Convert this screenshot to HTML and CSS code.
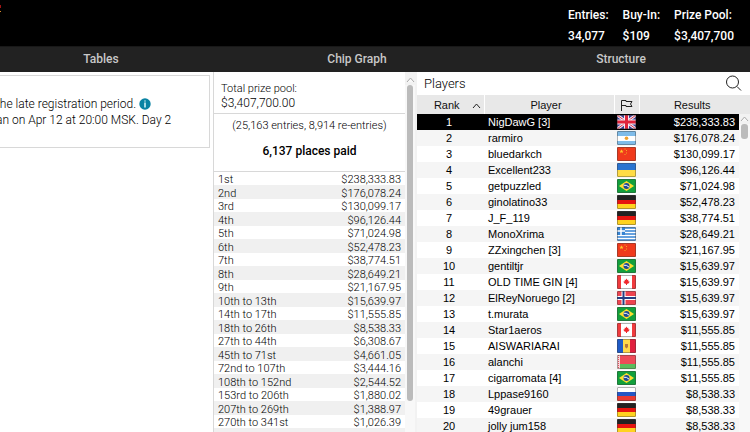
FILE: index.html
```html
<!DOCTYPE html>
<html lang="en">
<head>
  <meta charset="utf-8">
  <title>Tournament Lobby</title>
  <link rel="stylesheet" href="styles.css">
</head>
<body>
  <!-- flag icons -->
  <svg class="sprite" aria-hidden="true">
    <symbol id="gb" viewBox="0 0 19 14">
      <rect width="19" height="14" fill="#3b3f94"/>
      <path d="M0 0l19 14M19 0L0 14" stroke="#f4e9f1" stroke-width="3"/>
      <path d="M0 0l19 14M19 0L0 14" stroke="#d8344d" stroke-width="1"/>
      <path d="M9.5 0v14M0 7h19" stroke="#f4e9f1" stroke-width="5"/>
      <path d="M9.5 0v14M0 7h19" stroke="#e0243c" stroke-width="3"/>
    </symbol>
    <symbol id="ar" viewBox="0 0 19 14">
      <rect width="19" height="14" fill="#7fbce9"/>
      <rect y="5" width="19" height="5" fill="#fff"/>
      <circle cx="9.5" cy="7.2" r="1.8" fill="#f0a22e"/>
    </symbol>
    <symbol id="cn" viewBox="0 0 19 14">
      <rect width="19" height="14" fill="#f03a1c"/>
      <path d="M4.500 2.200l.6 1.500h1.600l-1.300 1 .5 1.600-1.400-1-1.400 1 .5-1.600-1.300-1h1.600z" fill="#ffc928"/>
      <path d="M7.500 1.500h1v1h-1zM9 3h1v1H9zM9 5.500h1v1H9zM7.500 7h1v1h-1z" fill="#f5a623"/>
    </symbol>
    <symbol id="ua" viewBox="0 0 19 14">
      <rect width="19" height="7" fill="#2a74d0"/>
      <rect y="7" width="19" height="7" fill="#ffdc45"/>
    </symbol>
    <symbol id="br" viewBox="0 0 19 14">
      <rect width="19" height="14" fill="#12a03c"/>
      <path d="M9.500 2l7.500 5-7.500 5L2 7z" fill="#ffde2e"/>
      <circle cx="9.500" cy="7" r="3" fill="#1f4b94"/>
      <path d="M6.700 6.200q3-.5 5.400 2" fill="none" stroke="#fff"/>
    </symbol>
    <symbol id="de" viewBox="0 0 19 14">
      <rect width="19" height="5" fill="#222"/>
      <rect y="5" width="19" height="4" fill="#e6140f"/>
      <rect y="9" width="19" height="5" fill="#ffd21f"/>
    </symbol>
    <symbol id="gr" viewBox="0 0 19 14">
      <rect width="19" height="14" fill="#fff"/>
      <path d="M0 1h19M0 4h19M0 7h19M0 10h19M0 13h19" stroke="#3583d3" stroke-width="1.700"/>
      <rect width="8" height="8" fill="#3583d3"/>
      <path d="M4 0v8M0 4h8" stroke="#fff" stroke-width="1.500"/>
    </symbol>
    <symbol id="ca" viewBox="0 0 19 14">
      <rect width="19" height="14" fill="#fff"/>
      <path d="M0 0h4v14H0zM15 0h4v14h-4z" fill="#f03a3d"/>
      <path d="M9.500 3.500l.9 1.500 1-.3-.2 1.600 1.600.4-1.700 2H10v1.300H9V8.700H7.900l-1.700-2 1.600-.4-.2-1.600 1 .3z" fill="#f0282c"/>
    </symbol>
    <symbol id="no" viewBox="0 0 19 14">
      <rect width="19" height="14" fill="#ee4450"/>
      <path d="M6.500 0v14M0 7h19" stroke="#fff" stroke-width="4"/>
      <path d="M6.500 0v14M0 7h19" stroke="#243f83" stroke-width="2"/>
    </symbol>
    <symbol id="md" viewBox="0 0 19 14">
      <rect width="19" height="14" fill="#ffd94a"/>
      <rect width="6" height="14" fill="#1f5bc7"/>
      <rect x="13" width="6" height="14" fill="#e0203e"/>
      <path d="M8 5h3v3l-1.500 1.500L8 8z" fill="#b5793c"/>
    </symbol>
    <symbol id="by" viewBox="0 0 19 14">
      <rect width="19" height="9" fill="#ee4a58"/>
      <rect y="9" width="19" height="5" fill="#5cbb5c"/>
      <rect width="3" height="14" fill="#f7d5d8"/>
      <path d="M1.500 0v14" stroke="#e0505c" stroke-dasharray="1 1"/>
    </symbol>
    <symbol id="ru" viewBox="0 0 19 14">
      <rect width="19" height="14" fill="#fff"/>
      <rect y="5" width="19" height="5" fill="#2456c4"/>
      <rect y="9" width="19" height="5" fill="#e83a32"/>
    </symbol>
  </svg>

  <header class="header">
    <svg class="logo" width="2" height="8" aria-hidden="true">
      <path d="M0 0h1v3H0z" fill="#a01414"/>
      <path d="M0 6h1v1H0z" fill="#d88a2a"/>
    </svg>
    <dl class="summary">
      <div><dt>Entries:</dt><dd>34,077</dd></div>
      <div><dt>Buy-In:</dt><dd>$109</dd></div>
      <div><dt>Prize Pool:</dt><dd>$3,407,700</dd></div>
    </dl>
  </header>

  <nav class="tabs">
    <a href="#tables">Tables</a>
    <a href="#chip-graph">Chip Graph</a>
    <a href="#structure">Structure</a>
  </nav>

  <main class="lobby">
    <section class="info">
      <div class="info-box">
        <p>the late registration period.
          <svg class="info-icon" width="12" height="12" viewBox="0 0 12 12" aria-hidden="true">
            <circle cx="6" cy="6" r="5.700" fill="#0a83a3"/>
            <path d="M5 2.500h2v1H5zM5 4.500h2v5H5z" fill="#a9dbe6"/>
          </svg>
        </p>
        <p>an on Apr 12 at 20:00 MSK. Day 2</p>
      </div>
    </section>

    <section class="prizes">
      <div class="prizes-content">
        <div class="pool">
          <div class="pool-label">Total prize pool:</div>
          <div class="pool-value">$3,407,700.00</div>
        </div>
        <div class="places">
          <div class="places-entries">(25,163 entries, 8,914 re-entries)</div>
          <div class="places-paid">6,137 places paid</div>
        </div>
        <table class="payouts">
          <tr><td>1st</td><td>$238,333.83</td></tr>
          <tr><td>2nd</td><td>$176,078.24</td></tr>
          <tr><td>3rd</td><td>$130,099.17</td></tr>
          <tr><td>4th</td><td>$96,126.44</td></tr>
          <tr><td>5th</td><td>$71,024.98</td></tr>
          <tr><td>6th</td><td>$52,478.23</td></tr>
          <tr><td>7th</td><td>$38,774.51</td></tr>
          <tr><td>8th</td><td>$28,649.21</td></tr>
          <tr><td>9th</td><td>$21,167.95</td></tr>
          <tr><td>10th to 13th</td><td>$15,639.97</td></tr>
          <tr><td>14th to 17th</td><td>$11,555.85</td></tr>
          <tr><td>18th to 26th</td><td>$8,538.33</td></tr>
          <tr><td>27th to 44th</td><td>$6,308.67</td></tr>
          <tr><td>45th to 71st</td><td>$4,661.05</td></tr>
          <tr><td>72nd to 107th</td><td>$3,444.16</td></tr>
          <tr><td>108th to 152nd</td><td>$2,544.52</td></tr>
          <tr><td>153rd to 206th</td><td>$1,880.02</td></tr>
          <tr><td>207th to 269th</td><td>$1,388.97</td></tr>
          <tr><td>270th to 341st</td><td>$1,026.39</td></tr>
          <tr><td></td><td></td></tr>
        </table>
      </div>
      <div class="scrollbar">
        <svg class="scroll-up" width="11" height="10" aria-hidden="true"><path d="M2 7l3.500-4L9 7"/></svg>
        <div class="scroll-track"><div class="scroll-thumb"></div></div>
      </div>
    </section>

    <section class="players">
      <div class="players-bar">
        <h2>Players</h2>
        <button class="search" aria-label="Search players">
          <svg width="17" height="17" viewBox="0 0 17 17"><circle cx="7.500" cy="7" r="6"/><path d="M12 11.500l4 4"/></svg>
        </button>
      </div>
      <div class="players-list">
        <table class="players-table">
          <colgroup><col class="col-rank"><col class="col-player"><col class="col-flag"><col></colgroup>
          <thead>
            <tr>
              <th class="rank-head">Rank <svg width="9" height="6" viewBox="0 0 9 6"><path d="M1 5l3.500-4L8 5"/></svg></th>
              <th class="player-head">Player</th>
              <th aria-label="Country"><svg width="13" height="12" viewBox="0 0 13 12"><path d="M1.500 12V1.500h4.500v1h6L10.500 5 12 7.500H6v-1H1.500"/></svg></th>
              <th class="results-head">Results</th>
            </tr>
          </thead>
          <tbody>
            <tr class="selected"><td>1</td><td>NigDawG [3]</td><td><svg class="flag"><use href="#gb"/></svg></td><td>$238,333.83</td></tr>
            <tr><td>2</td><td>rarmiro</td><td><svg class="flag"><use href="#ar"/></svg></td><td>$176,078.24</td></tr>
            <tr><td>3</td><td>bluedarkch</td><td><svg class="flag"><use href="#cn"/></svg></td><td>$130,099.17</td></tr>
            <tr><td>4</td><td>Excellent233</td><td><svg class="flag"><use href="#ua"/></svg></td><td>$96,126.44</td></tr>
            <tr><td>5</td><td>getpuzzled</td><td><svg class="flag"><use href="#br"/></svg></td><td>$71,024.98</td></tr>
            <tr><td>6</td><td>ginolatino33</td><td><svg class="flag"><use href="#de"/></svg></td><td>$52,478.23</td></tr>
            <tr><td>7</td><td>J_F_119</td><td><svg class="flag"><use href="#de"/></svg></td><td>$38,774.51</td></tr>
            <tr><td>8</td><td>MonoXrima</td><td><svg class="flag"><use href="#gr"/></svg></td><td>$28,649.21</td></tr>
            <tr><td>9</td><td>ZZxingchen [3]</td><td><svg class="flag"><use href="#cn"/></svg></td><td>$21,167.95</td></tr>
            <tr><td>10</td><td>gentiltjr</td><td><svg class="flag"><use href="#br"/></svg></td><td>$15,639.97</td></tr>
            <tr><td>11</td><td>OLD TIME GIN [4]</td><td><svg class="flag"><use href="#ca"/></svg></td><td>$15,639.97</td></tr>
            <tr><td>12</td><td>ElReyNoruego [2]</td><td><svg class="flag"><use href="#no"/></svg></td><td>$15,639.97</td></tr>
            <tr><td>13</td><td>t.murata</td><td><svg class="flag"><use href="#br"/></svg></td><td>$15,639.97</td></tr>
            <tr><td>14</td><td>Star1aeros</td><td><svg class="flag"><use href="#ca"/></svg></td><td>$11,555.85</td></tr>
            <tr><td>15</td><td>AISWARIARAI</td><td><svg class="flag"><use href="#md"/></svg></td><td>$11,555.85</td></tr>
            <tr><td>16</td><td>alanchi</td><td><svg class="flag"><use href="#by"/></svg></td><td>$11,555.85</td></tr>
            <tr><td>17</td><td>cigarromata [4]</td><td><svg class="flag"><use href="#br"/></svg></td><td>$11,555.85</td></tr>
            <tr><td>18</td><td>Lppase9160</td><td><svg class="flag"><use href="#ru"/></svg></td><td>$8,538.33</td></tr>
            <tr><td>19</td><td>49grauer</td><td><svg class="flag"><use href="#de"/></svg></td><td>$8,538.33</td></tr>
            <tr><td>20</td><td>jolly jum158</td><td><svg class="flag"><use href="#de"/></svg></td><td>$8,538.33</td></tr>
          </tbody>
        </table>
        <div class="scrollbar players-scroll">
          <svg class="scroll-up" width="11" height="10" aria-hidden="true"><path d="M2 7l3.500-4L9 7"/></svg>
          <div class="scroll-track"><div class="scroll-thumb"></div></div>
        </div>
      </div>
    </section>
  </main>
</body>
</html>
```
FILE: styles.css
```css
* {
  box-sizing: border-box;
}

body {
  margin: 0;
  height: 100vh;
  overflow: hidden;
  display: flex;
  flex-direction: column;
  background: #fff;
  color: #000;
  font-family: Roboto, "Liberation Sans", sans-serif;
  font-size: 12px;
  font-weight: 300;
}

.sprite {
  position: absolute;
  width: 0;
  height: 0;
}

.header {
  display: flex;
  justify-content: space-between;
  align-items: flex-start;
  height: 46px;
  padding: 5px 16px 0 0;
  background: #000;
  color: #fff;
}

.summary {
  display: flex;
  gap: 14px;
  margin: 0;
  font-weight: 500;
  line-height: 21px;
}

.summary dd {
  margin: 0;
}

.tabs {
  display: grid;
  grid-template-columns: 202px 310px 1fr;
  padding-right: 20px;
  border-top: 1px solid #181818;
  background: #222;
}

.tabs a {
  color: #c8c8c8;
  font-weight: 500;
  line-height: 25px;
  text-align: center;
  text-decoration: none;
}

.lobby {
  flex: 1;
  min-height: 0;
  display: grid;
  grid-template-columns: 213px 204px 1fr;
}

/* registration info */
.info {
  overflow: hidden;
}

.info-box {
  height: 73px;
  margin: 3px 3px 0 -5px;
  padding: 20px 0;
  border: 1px solid #d8d8d8;
  line-height: 16px;
  white-space: nowrap;
}

.info-box p {
  margin: 0;
}

.info-icon {
  vertical-align: -2px;
}

/* prize pool */
.prizes {
  display: flex;
  min-height: 0;
  overflow: hidden;
  border-left: 1px solid #d8d8d8;
}

.prizes-content {
  flex: 1;
}

.pool {
  height: 42px;
  padding: 9px 7px 0;
  border-bottom: 1px solid #d8d8d8;
  line-height: 15px;
}

.pool-label {
  font-size: 11px;
}

.places {
  height: 58px;
  padding-top: 4px;
  border-bottom: 1px solid #d8d8d8;
  text-align: center;
}

.places-entries {
  font-size: 11px;
  line-height: 16px;
}

.places-paid {
  margin-top: 8px;
  font-weight: 500;
  line-height: 18px;
}

.payouts {
  width: 100%;
  border-collapse: collapse;
  font-size: 11px;
  line-height: 11px;
}

.payouts td {
  height: 13px;
  padding: 2px 4px 0;
}

.payouts tr:nth-child(even) {
  background: #f0f0f0;
}

.payouts tr:nth-child(even) td {
  height: 14px;
}

.payouts td:last-child {
  text-align: right;
}

/* scrollbars */
.scrollbar {
  display: flex;
  flex-direction: column;
  width: 12px;
  padding: 3px 2px 0 0;
  background: #f2f2f2;
}

.scroll-up {
  fill: #f8f8f8;
  stroke: #aaa;
}

.scroll-track {
  flex: 1;
  padding: 0 2px;
  background: #f8f8f8;
}

.scroll-thumb {
  height: 91%;
  border-radius: 3px;
  background: #bbb;
}

.players-scroll {
  position: absolute;
  top: 19px;
  right: 0;
  bottom: 0;
  width: 11px;
  padding: 0;
}

.players-scroll .scroll-thumb {
  height: 5%;
}

/* players */
.players {
  display: flex;
  flex-direction: column;
  min-height: 0;
}

.players-bar {
  display: flex;
  justify-content: space-between;
  align-items: center;
  height: 23px;
  padding: 0 8px 0 7px;
}

.players-bar h2 {
  margin: 0;
  font-size: 13px;
  font-weight: 300;
}

.search {
  display: flex;
  padding: 0;
  border: none;
  background: none;
  cursor: pointer;
}

.search svg,
.players-table th svg {
  fill: none;
  stroke: #222;
}

.players-list {
  position: relative;
  flex: 1;
  min-height: 0;
  overflow: hidden;
}

.players-table {
  width: 100%;
  table-layout: fixed;
  border-collapse: collapse;
  font-family: "Liberation Sans", Arial, sans-serif;
  font-size: 11px;
  font-weight: 400;
  line-height: 16px;
}

.col-rank {
  width: 67px;
}

.col-player {
  width: 130px;
}

.col-flag {
  width: 25px;
}

.players-table th {
  height: 19px;
  padding: 0;
  border-right: 1px solid #fff;
  background: #e8e8e8;
  color: #111;
  font-weight: 400;
}

.players-table .rank-head {
  padding-left: 14px;
}

.rank-head svg {
  margin-left: 9px;
}

.players-table .player-head {
  padding-right: 6px;
}

.players-table th:nth-child(3) svg {
  display: block;
  margin: auto;
}

.players-table .results-head {
  padding-right: 5px;
  border-right: none;
}

.players-table td {
  height: 16px;
  padding: 0 4px;
}

.players-table td:first-child {
  padding-right: 7px;
  text-align: center;
}

.players-table td:nth-child(3) {
  padding: 0 3px;
}

.players-table td:last-child {
  padding-right: 15px;
  text-align: right;
}

.players-table tbody tr:nth-child(even) {
  background: #f5f5f5;
}

.players-table .selected {
  background: #000;
  color: #fff;
}

.flag {
  display: block;
  width: 19px;
  height: 14px;
  border-radius: 1px;
  outline: 1px solid rgba(60, 60, 60, 0.4);
  outline-offset: -1px;
}
```
